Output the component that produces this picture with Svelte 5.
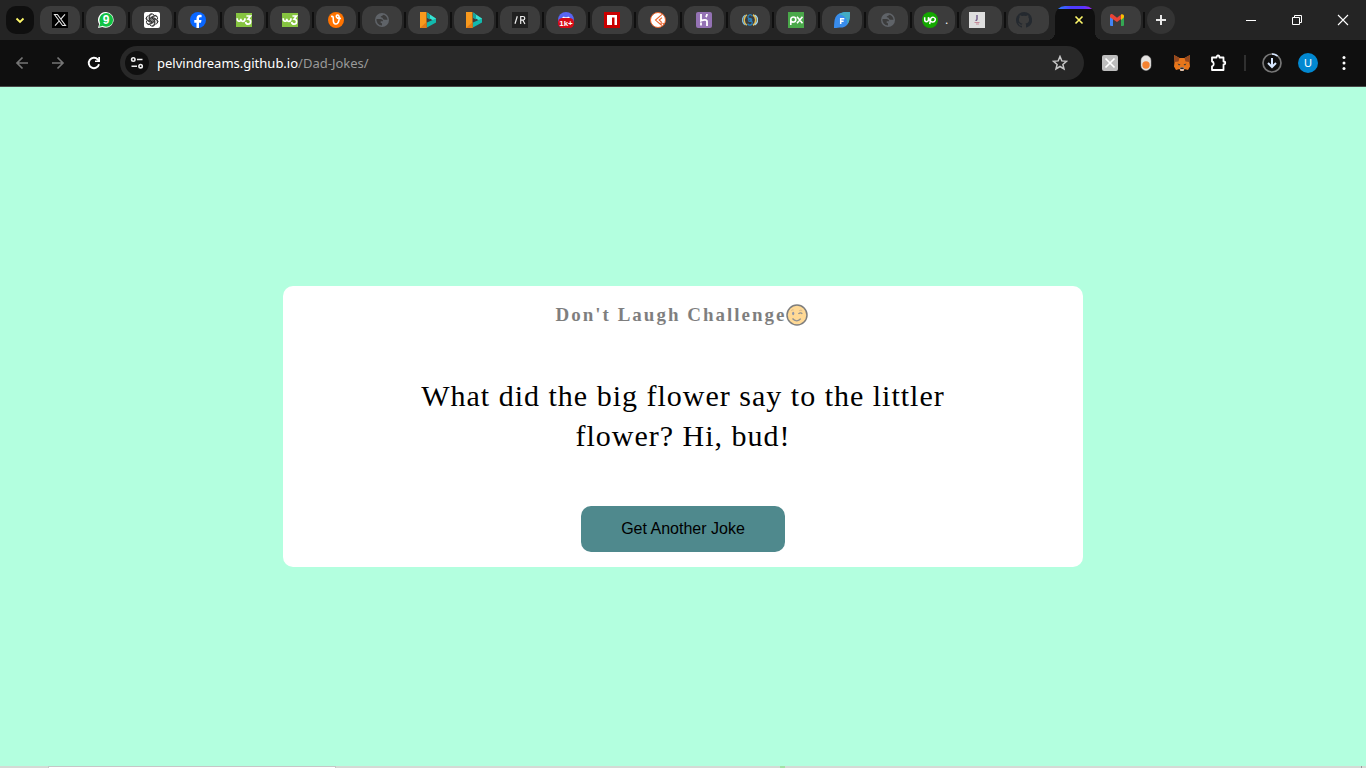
<script>
  const jokes = [
    'What did the big flower say to the littler flower? Hi, bud!',
    'What do you call cheese that is not yours? Nacho cheese!',
    'Why did the scarecrow win an award? He was outstanding in his field.'
  ];
  let current = $state(0);

  const tabs = [
    'x', 'whatsapp', 'openai', 'facebook', 'w3', 'w3', 'vultr', 'globe', 'play', 'play',
    'slashr', 'discord', 'npm', 'postcard', 'heroku', 'braces', 'px', 'figleaf', 'globe',
    'upwork', 'letter', 'github'
  ];

  function nextJoke() {
    current = (current + 1) % jokes.length;
  }
</script>

{#snippet favicon(name)}
  <svg class="icon" viewBox="0 0 16 16" aria-hidden="true">
    {#if name === 'x'}
      <rect width="16" height="16" fill="#000" />
      <path d="M2.5 2.500h2.900l8.100 11h-2.900zM13 2.300 8.800 7.200M7.200 9 3 13.700" fill="none" stroke="#e4e4e4" stroke-width="1.100" />
    {:else if name === 'whatsapp'}
      <path d="M8.200 0A7.900 7.900 0 1 1 4.300 15L0 16l1.200-4A7.900 7.900 0 0 1 8.200 0z" fill="#fff" />
      <circle cx="8.200" cy="7.900" r="6.900" fill="#12c143" />
      <path d="m1.200 14.800 1-3.900 2.900 2.900z" fill="#12c143" />
      <text x="8.200" y="12" class="glyph" font-size="12" font-weight="700" fill="#fff">9</text>
    {:else if name === 'openai'}
      <rect width="16" height="16" rx="2" fill="#fff" />
      <g fill="none" stroke="#222" stroke-width=".8">
        {#each [0, 60, 120, 180, 240, 300] as turn}
          <path d="M5.700 9.300V4.600a2.500 2.500 0 0 1 4.400-1.700M6.900 8.600V5.300l3-1.700a2.500 2.500 0 0 1 3.500 1.500" transform="rotate({turn} 8 8)" />
        {/each}
      </g>
    {:else if name === 'facebook'}
      <circle cx="8" cy="8" r="8" fill="#0866ff" />
      <path d="M6.500 16v-5.300H4.300V8.100h2.200V6.700c0-2.700 1.300-3.900 3.600-3.900.6 0 1.200.1 1.500.2v2.200h-1.200c-1.100 0-1.400.5-1.400 1.500v1.400h2.500l-.5 2.600h-2V16z" fill="#fff" />
    {:else if name === 'w3'}
      <rect y="1" width="16" height="14" fill="#86c440" />
      <path d="M1.200 6.200c0 4 3.600 4 3.600.5 0 3.500 4.200 3.800 4.200-.4M10.400 4h4.100l-2.400 3.100c3.500.2 3.200 5-.1 5-1.400 0-2.200-.8-2.400-2.100" fill="none" stroke="#fff" stroke-width="1.700" />
    {:else if name === 'vultr'}
      <circle cx="8" cy="8" r="8" fill="#ff7300" />
      <path d="M3 4.500c2.300-.5 2.300.5 2.300 3.300 0 5.800 4.500 5.300 5.600.8.700-3.200.2-5.600-1.300-5.600-2.300 0-1.700 4.300 3.400 3.400" fill="none" stroke="#fff" stroke-width="1.600" />
    {:else if name === 'globe'}
      <circle cx="8" cy="8" r="7" fill="#5f6368" />
      <path d="M2.500 7h3.800c2 0 2.800 1 2.800 2.300H6.700v1.800l1.300.2v2.200A5.500 5.500 0 0 1 2.500 7zM9 2.700c0 1.500-2.300 1-2.300 2.100 0 1.300 2 .3 2.200 1.600.2 1.200 1.300 1.300 2.300 1.300h2.300C13.400 5.200 11.700 3 9 2.700z" fill="#3c3c3c" />
    {:else if name === 'play'}
      <path d="M0 0h6.500v16H0z" fill="#f8991d" />
      <path d="m0 16 6.500-6v6z" fill="#e17b18" />
      <path d="m7 .5 9 6V10L7 5z" fill="#36e3d3" />
      <path d="m16 6.500-9 4v5l9-5z" fill="#12b9ad" />
      <path d="M7 .500V6l3 1.500V2.500z" fill="#16a39f" />
    {:else if name === 'slashr'}
      <rect width="16" height="16" fill="#202020" />
      <path d="m3 11.700 2.300-7.400M8.700 12V4.500h2.200c2.500 0 2.500 3.700 0 3.700H8.700m2.200 0 2 3.800" fill="none" stroke="#eee" stroke-width="1.200" />
    {:else if name === 'discord'}
      <circle cx="8" cy="8" r="8" fill="#5865f2" />
      <path d="M4.500 5.300 6 4.500l.6.700h2.800l.6-.700 1.500.800 1 3h-9z" fill="#fff" />
      <rect y="6" width="16" height="10" rx="4.500" fill="#d70b18" />
      <text x="8" y="14" class="glyph" font-size="8" font-weight="700" fill="#fff">1k+</text>
    {:else if name === 'npm'}
      <rect width="16" height="16" fill="#c90000" />
      <path d="M3 3h10v10h-2.500V5.500H8V13H3z" fill="#fff" />
    {:else if name === 'postcard'}
      <circle cx="8" cy="8" r="7.500" fill="#fff" stroke="#e9622b" />
      <path d="m12 2.300-6.500 5.800 5.700 4.900V9.800L9.200 8.100l2.800-2.500M12.500 11l1.700 1.500" fill="none" stroke="#e9622b" stroke-width="1.100" />
    {:else if name === 'heroku'}
      <rect width="16" height="16" rx="2" fill="#9472b4" />
      <path d="M5 2v6.800c2.700-1.300 6-1.600 6 .8V14M11 2c0 1.400-.5 2.300-1.200 3M5 10.500v3" fill="none" stroke="#fff" stroke-width="1.800" />
    {:else if name === 'braces'}
      <path d="M3.500 3C-.5 5.500-.5 10.500 3.500 13" fill="none" stroke="#7ab8dc" stroke-width="1.300" />
      <path d="M5 2.800C1.300 5.300 1.300 10.700 5 13.200" fill="none" stroke="#e2bf57" stroke-width="1.300" />
      <path d="M11 2.800c3.700 2.500 3.700 7.900 0 10.400" fill="none" stroke="#e2bf57" stroke-width="1.700" />
      <path d="M12.700 3c4 2.500 4 7.500 0 10" fill="none" stroke="#9fd2ec" stroke-width="1.300" />
      <path d="M10.300 4.200C8.800 1.500 5.500 2.800 6 5.300c.5 2.300 4.300 2.700 4.300 5.200 0 2.700-3.500 3.600-4.700 1.100M6.500 8c-1-2 3.500-2 3.200 0s-3.600 1.600-3.200 0" fill="none" stroke="#2b80b9" stroke-width="1.300" />
    {:else if name === 'px'}
      <rect width="16" height="16" fill="#4aa84a" />
      <path d="M2.800 13V7.500c0-3.300 5-3.200 5 0 0 3-3.800 3.300-4.800 1.400M9 4.700l5.500 6.500M14.500 4.700 9 11.200" fill="none" stroke="#fff" stroke-width="1.600" />
    {:else if name === 'figleaf'}
      <path d="M8 .8C10 0 13 0 16 0c0 3 0 6-.8 8.500C14 13 11 15.500 7.500 15.500 5 15.500 3 16 0 16c0-3 .2-5 .6-8C1.300 4 4 1.500 8 .8z" fill="#388cec" />
      <path d="M8 .8C10 0 13 0 16 0c0 3 0 6-.8 8.500-.4 1.700-1 3-1.900 4C14 6.500 10 3 4.500 2.200z" fill="#43acc3" />
      <path d="M6.700 12V6.700h3.600M6.700 9.300h2.900" fill="none" stroke="#fff" stroke-width="1.500" />
    {:else if name === 'upwork'}
      <circle cx="8" cy="8" r="8" fill="#14a800" />
      <path d="M2.700 5.300v2.500c0 2.500 3.700 2.500 3.700 0V5.300C7 7.500 8 9.300 9.800 9.900c3.500.9 4.900-3.500 1.900-4.500-2-.6-3 .8-3.200 2.500l-.8 4.300" fill="none" stroke="#fff" stroke-width="1.500" />
    {:else if name === 'letter'}
      <rect width="16" height="16" fill="#dedede" />
      <path d="M8 3v4c0 1-1 1.200-1 2" fill="none" stroke="#76618f" stroke-width="1.500" />
      <path d="M5.500 10.500h5M7 12h3" fill="none" stroke="#c88d9a" />
    {:else if name === 'github'}
      <path d="M8 0a8 8 0 0 0-2.500 15.600c.4.100.5-.2.500-.4v-1.500c-2.200.5-2.700-1-2.700-1-.4-.9-.9-1.200-.9-1.200-.7-.5.100-.5.100-.5.800.1 1.200.8 1.200.8.700 1.200 1.900.9 2.300.7.100-.5.300-.9.500-1.100-1.800-.2-3.600-.9-3.600-4 0-.9.300-1.600.8-2.100-.1-.2-.4-1 .1-2.100 0 0 .7-.2 2.200.8a7.500 7.500 0 0 1 4 0c1.500-1 2.200-.8 2.200-.8.500 1.100.2 1.900.1 2.100.5.600.8 1.300.8 2.100 0 3.100-1.900 3.700-3.600 3.900.3.300.5.800.5 1.500v2.400c0 .2.200.5.600.4A8 8 0 0 0 8 0z" fill="#24292f" />
    {:else if name === 'gmail'}
      <path d="M1 4h3v10H2a1 1 0 0 1-1-1z" fill="#4285f4" />
      <path d="M12 6h3v7a1 1 0 0 1-1 1h-2z" fill="#34a853" />
      <path d="M1 4c0-2 2-2.500 3.200-1.300L8 5.700l3.800-3L12 7 8 10 1 5.300z" fill="#ea4335" />
      <path d="M12 2.600C13.300 1.700 15 2.500 15 4v1.600L12 8z" fill="#fbbc04" />
    {/if}
  </svg>
{/snippet}

<div class="browser">
  <header>
    <div class="tabstrip">
      <button class="search-tabs" aria-label="Search tabs">
        <svg class="icon" viewBox="0 0 16 16"><path d="m4.500 6.500 3.500 3.500 3.500-3.500" fill="none" stroke="#fff96b" stroke-width="1.800" /></svg>
      </button>
      <nav class="tabs" aria-label="Open tabs">
        {#each tabs as tab, i}
          <button class="tab" class:wide={i > 18} aria-label={tab}>
            {@render favicon(tab)}
            {#if tab === 'upwork'}<span class="title">.</span>{/if}
          </button>
          <span class="divider" class:clear={i === tabs.length - 1}></span>
        {/each}
        <div class="tab active">
          <button class="close-tab" aria-label="Close tab">
            <svg class="icon" viewBox="0 0 16 16"><path d="m4.500 4.500 7 7m0-7-7 7" stroke="#fff96b" stroke-width="1.600" /></svg>
          </button>
        </div>
        <span class="divider clear"></span>
        <button class="tab left" aria-label="gmail">{@render favicon('gmail')}</button>
        <span class="divider"></span>
      </nav>
      <button class="new-tab" aria-label="New tab">
        <svg class="icon" viewBox="0 0 16 16"><path d="M8 3v10M3 8h10" stroke="#e8e8e8" stroke-width="2" /></svg>
      </button>
      <div class="window-controls">
        <button aria-label="Minimize"><svg class="icon" viewBox="0 0 16 16"><path d="M3 8.500h10" stroke="#fff" /></svg></button>
        <button aria-label="Restore"><svg class="icon" viewBox="0 0 16 16"><path d="M3.500 5.500h7v7h-7zM5.500 5V3.500h7v7H11" fill="none" stroke="#fff" /></svg></button>
        <button aria-label="Close"><svg class="icon" viewBox="0 0 16 16"><path d="m3 3 10 10m0-10L3 13" stroke="#fff" stroke-width="1.100" /></svg></button>
      </div>
    </div>

    <div class="toolbar">
      <button class="tool" aria-label="Back"><svg class="icon" viewBox="0 0 16 16"><path d="M14 8H3m5.500-5.500L3 8l5.500 5.500" fill="none" stroke="#757575" stroke-width="1.700" /></svg></button>
      <button class="tool" aria-label="Forward"><svg class="icon" viewBox="0 0 16 16"><path d="M2 8h11M7.500 2.500 13 8l-5.500 5.500" fill="none" stroke="#757575" stroke-width="1.700" /></svg></button>
      <button class="tool" aria-label="Reload"><svg class="icon" viewBox="0 0 16 16"><path d="M13 9.300A5.200 5.200 0 1 1 11.800 4.500L13 5.800" fill="none" stroke="#fff" stroke-width="1.900" /><path d="M14 2v5H9V5.400h3.300V2z" fill="#fff" /></svg></button>
      <div class="address">
        <button class="site-info" aria-label="Site information">
          <svg class="icon" viewBox="0 0 16 16" fill="none" stroke="#eee" stroke-width="1.600"><circle cx="4.300" cy="4.500" r="1.700" /><path d="M8 4.500h5.500M2.500 11.200H8" /><circle cx="11.600" cy="11.200" r="1.700" /></svg>
        </button>
        <a class="url" href="#dad-jokes"><span>pelvindreams.github.io</span>/Dad-Jokes/</a>
        <button class="tool" aria-label="Bookmark"><svg class="icon" viewBox="0 0 16 16"><path d="m8 1.500 1.800 4.400 4.700.4-3.600 3.100 1.100 4.600L8 11.500 4 14l1.100-4.600-3.600-3.100 4.700-.4z" fill="none" stroke="#c7c7c7" stroke-width="1.500" /></svg></button>
      </div>
      <div class="extensions">
        <button class="tool" aria-label="X extension"><svg class="icon" viewBox="0 0 16 16"><rect width="16" height="16" rx="2" fill="#bdbdbd" /><path d="m3.500 3.500 9 9m0-9-9 9" stroke="#fff" stroke-width="1.700" /></svg></button>
        <button class="tool" aria-label="Capture extension"><svg class="icon" viewBox="0 0 16 16"><rect x="3" y=".5" width="10" height="15" rx="5" fill="#e6e4e2" stroke="#aaa" stroke-width=".5" /><circle cx="8" cy="10" r="3.700" fill="#f58231" /></svg></button>
        <button class="tool" aria-label="Wallet"><svg class="icon" viewBox="0 0 16 16">
          <path d="m0 0 5.500 3h5L16 0l-.5 7 .5 4.500-2 3.500-3.500-1-1 2h-3l-1-2L2 15 0 11.500.5 7z" fill="#e8761b" />
          <path d="m0 0 5.500 3L4.500 6.500.5 7zM16 0l-5.500 3 1 3.500 4 .5z" fill="#94481f" />
          <path d="m3.500 8.500 3 1-1.500 1zM12.500 8.500l-3 1 1.500 1z" fill="#273a43" />
          <path d="m5.700 13 .6-.800h3.400l.6.800-.800 3h-3z" fill="#d6c1b3" /><path d="M6.300 12.500h3.400V14H6.300z" fill="#292525" />
        </svg></button>
        <button class="tool" aria-label="Extensions"><svg class="extension-icon" viewBox="0 0 18 18"><path d="M3 3.500h4.500c0-2.700 3-2.700 3 0H14.500v4c2.300 0 2.300 3 0 3V16H3v-3.700c2.300-.5 2.300-4.300 0-4.800z" fill="none" stroke="#fff" stroke-width="1.800" stroke-linejoin="round" /></svg></button>
        <span class="rule"></span>
        <button class="tool" aria-label="Downloads"><svg class="large-icon" viewBox="0 0 20 20"><circle cx="10" cy="10" r="9" fill="none" stroke="#777" stroke-width="1.700" /><path d="M10 1a9 9 0 0 1 5.500 1.900" fill="none" stroke="#d7e7ff" stroke-width="1.700" /><path d="M10 5v9m-4-4 4 4 4-4" fill="none" stroke="#d7e7ff" stroke-width="2" /></svg></button>
        <button class="tool" aria-label="Profile"><span class="avatar">U</span></button>
        <button class="tool" aria-label="Menu"><svg class="icon" viewBox="0 0 16 16" fill="#fff"><circle cx="8" cy="2.500" r="1.500" /><circle cx="8" cy="8" r="1.500" /><circle cx="8" cy="13.500" r="1.500" /></svg></button>
      </div>
    </div>
  </header>

  <main>
    <section class="card">
      <h1>Don't Laugh Challenge<svg class="wink" viewBox="0 0 22 22" role="img" aria-label="Winking face">
        <circle cx="11" cy="11" r="10" fill="#ffb52e" stroke="#000" stroke-width="1.500" />
        <ellipse cx="7.200" cy="9.500" rx="1.100" ry="1.700" fill="#212f55" />
        <path d="M12.500 10c.8-1.500 2.700-1.500 3.800-.3M6.500 14.500c2.300 3 6.200 3 8.200.2" fill="none" stroke="#242424" stroke-width="1.300" />
        <path d="M5.200 6.700c.7-.8 1.500-1 2.300-.8M13.300 6.700c1.200-.6 2-.6 2.900 0" fill="none" stroke="#a56b22" />
      </svg></h1>
      <p>{jokes[current]}</p>
      <button class="joke-button" onclick={nextJoke}>Get Another Joke</button>
    </section>
  </main>

  <footer aria-hidden="true">
    <span class="start"></span><span class="search"></span><span class="apps"></span><span class="progress"></span><span class="tray"></span><span class="edge"></span>
  </footer>
</div>

<style>
  :global(body) { margin: 0; }
  * { box-sizing: border-box; }
  .browser { min-height: 100vh; display: flex; flex-direction: column; background: #b3ffdf; }
  button { border: 0; padding: 0; background: none; color: inherit; display: flex; align-items: center; justify-content: center; }
  svg { display: block; flex: none; }
  .icon { width: 16px; height: 16px; }
  .extension-icon { width: 18px; height: 18px; }
  .large-icon { width: 20px; height: 20px; }
  .glyph { font-family: "Liberation Sans", Arial, sans-serif; text-anchor: middle; }
  header { background: #0f0f0f; border-bottom: 1px solid #484848; font-family: "Noto Sans", "Segoe UI", sans-serif; }
  .tabstrip { height: 40px; display: flex; align-items: center; padding-left: 6px; background: #242424; }
  .search-tabs { width: 28px; height: 28px; border-radius: 10px; background: #0f0f0f; margin-right: 6px; }
  .tabs { display: flex; align-items: center; align-self: stretch; min-width: 0; }
  .tab { width: 40px; height: 28px; border-radius: 10px; background: #3c3c3c; flex: none; }
  .wide { width: 41px; justify-content: flex-start; padding-left: 8px; }
  .left { justify-content: flex-start; padding-left: 8px; }
  .title { color: #fff; font-size: 12px; line-height: 16px; margin-left: 7px; }
  .divider { width: 6px; height: 16px; border: solid #242424; border-width: 0 2px; background: #0f0f0f; flex: none; }
  .clear { visibility: hidden; }
  .active { position: relative; display: flex; align-items: center; justify-content: flex-end; height: 34px; padding: 0 8px 6px 0; border-radius: 10px 10px 0 0; align-self: flex-end; background: linear-gradient(90deg, #258cff, #4d3dff 40%, #5635ff 70%, #b51ee8) top / 100% 3px no-repeat, #0f0f0f; }
  .active::before, .active::after { content: ""; position: absolute; bottom: 0; width: 8px; height: 8px; }
  .active::before { right: 100%; background: radial-gradient(circle at 0 0, transparent 8px, #0f0f0f 8px); }
  .active::after { left: 100%; background: radial-gradient(circle at 100% 0, transparent 8px, #0f0f0f 8px); }
  .new-tab { width: 28px; height: 28px; border-radius: 50%; background: #343434; flex: none; }
  .window-controls { display: flex; margin-left: auto; }
  .window-controls button { width: 46px; height: 40px; }
  .toolbar { height: 46px; display: flex; align-items: center; padding: 0 4px; }
  .tool { width: 36px; height: 34px; flex: none; }
  .address { flex: 1; min-width: 0; height: 34px; margin: 0 8px; padding: 0 6px 0 5px; border-radius: 17px; background: #282828; display: flex; align-items: center; }
  .site-info { width: 24px; height: 24px; border-radius: 50%; background: #0f0f0f; flex: none; }
  .url { flex: 1; margin-left: 8px; color: #999; font-size: 13px; line-height: 18px; text-decoration: none; white-space: nowrap; overflow: hidden; }
  .url span { color: #fff; }
  .extensions { display: flex; align-items: center; }
  .rule { width: 2px; height: 16px; margin: 0 8px; background: #303030; }
  .avatar { width: 20px; height: 20px; border-radius: 50%; background: #0288d1; color: #fff; font-size: 11px; line-height: 20px; }
  main { flex: 1; display: flex; align-items: center; justify-content: center; font-family: "Liberation Serif", "Times New Roman", serif; }
  .card { width: 800px; max-width: 100%; padding: 15px 100px; border-radius: 10px; background: #fff; display: flex; flex-direction: column; align-items: center; text-align: center; }
  h1 { display: flex; align-items: center; margin: 0; font-size: 19px; line-height: 28px; letter-spacing: 2px; opacity: .5; }
  .wink { width: 22px; height: 22px; margin-right: 2px; }
  p { margin: 47px 0 50px; max-width: 600px; font-size: 30px; line-height: 40px; letter-spacing: 1px; }
  .joke-button { height: 46px; padding: 0 40px; border-radius: 10px; background: #4f898d; color: #000; font-family: "Liberation Sans", Arial, sans-serif; font-size: 16px; cursor: pointer; }
  footer { display: flex; height: 2px; background: #d5dad5; }
  .start { width: 48px; }
  .search { width: 288px; background: #fff; border: solid #c6c6c6; border-width: 1px 1px 0; }
  .apps { width: 444px; }
  .progress { width: 5px; background: #a6dfa6; }
  .tray { flex: 1; }
  .edge { width: 1px; background: #999; margin-right: 4px; }
</style>
